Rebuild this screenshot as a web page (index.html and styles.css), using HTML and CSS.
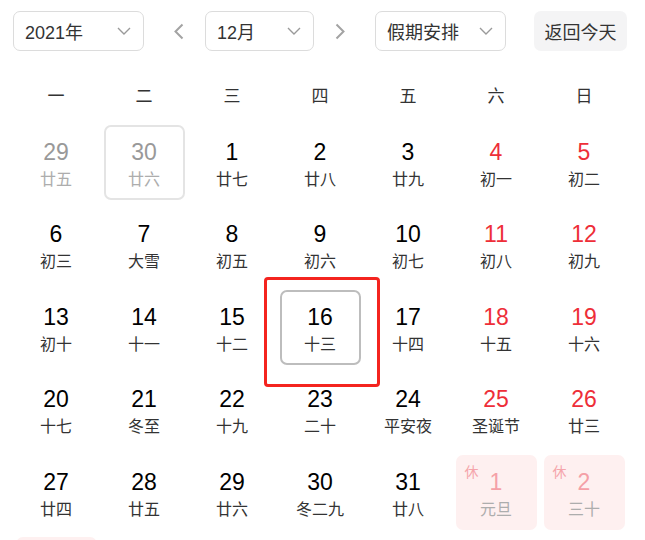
FILE: index.html
```html
<!DOCTYPE html>
<html lang="zh-CN">
<head>
<meta charset="utf-8">
<title>日历</title>
<link rel="stylesheet" href="styles.css">
</head>
<body>
<div class="calendar">
  <div class="toolbar">
    <div class="select select-year"><span>2021年</span><svg class="chev" width="14" height="8" viewBox="0 0 14 8"><path d="M1 1l6 6 6-6"/></svg></div>
    <div class="arrow arrow-prev"><svg width="11" height="17" viewBox="0 0 11 17"><path d="M9.5 1.5 2.5 8.5l7 7"/></svg></div>
    <div class="select select-month"><span>12月</span><svg class="chev" width="14" height="8" viewBox="0 0 14 8"><path d="M1 1l6 6 6-6"/></svg></div>
    <div class="arrow arrow-next"><svg width="11" height="17" viewBox="0 0 11 17"><path d="M1.5 1.5l7 7-7 7"/></svg></div>
    <div class="select select-holiday"><span>假期安排</span><svg class="chev" width="14" height="8" viewBox="0 0 14 8"><path d="M1 1l6 6 6-6"/></svg></div>
    <div class="today-btn">返回今天</div>
  </div>

  <div class="weekdays">
    <div>一</div><div>二</div><div>三</div><div>四</div><div>五</div><div>六</div><div>日</div>
  </div>

  <div class="days">
    <div class="day other"><span class="num">29</span><span class="lunar">廿五</span></div>
    <div class="day other hover"><span class="num">30</span><span class="lunar">廿六</span></div>
    <div class="day"><span class="num">1</span><span class="lunar">廿七</span></div>
    <div class="day"><span class="num">2</span><span class="lunar">廿八</span></div>
    <div class="day"><span class="num">3</span><span class="lunar">廿九</span></div>
    <div class="day weekend"><span class="num">4</span><span class="lunar">初一</span></div>
    <div class="day weekend"><span class="num">5</span><span class="lunar">初二</span></div>

    <div class="day"><span class="num">6</span><span class="lunar">初三</span></div>
    <div class="day"><span class="num">7</span><span class="lunar">大雪</span></div>
    <div class="day"><span class="num">8</span><span class="lunar">初五</span></div>
    <div class="day"><span class="num">9</span><span class="lunar">初六</span></div>
    <div class="day"><span class="num">10</span><span class="lunar">初七</span></div>
    <div class="day weekend"><span class="num">11</span><span class="lunar">初八</span></div>
    <div class="day weekend"><span class="num">12</span><span class="lunar">初九</span></div>

    <div class="day"><span class="num">13</span><span class="lunar">初十</span></div>
    <div class="day"><span class="num">14</span><span class="lunar">十一</span></div>
    <div class="day"><span class="num">15</span><span class="lunar">十二</span></div>
    <div class="day today"><span class="num">16</span><span class="lunar">十三</span><span class="mark"></span></div>
    <div class="day"><span class="num">17</span><span class="lunar">十四</span></div>
    <div class="day weekend"><span class="num">18</span><span class="lunar">十五</span></div>
    <div class="day weekend"><span class="num">19</span><span class="lunar">十六</span></div>

    <div class="day"><span class="num">20</span><span class="lunar">十七</span></div>
    <div class="day"><span class="num">21</span><span class="lunar">冬至</span></div>
    <div class="day"><span class="num">22</span><span class="lunar">十九</span></div>
    <div class="day"><span class="num">23</span><span class="lunar">二十</span></div>
    <div class="day"><span class="num">24</span><span class="lunar">平安夜</span></div>
    <div class="day weekend"><span class="num">25</span><span class="lunar">圣诞节</span></div>
    <div class="day weekend"><span class="num">26</span><span class="lunar">廿三</span></div>

    <div class="day"><span class="num">27</span><span class="lunar">廿四</span></div>
    <div class="day"><span class="num">28</span><span class="lunar">廿五</span></div>
    <div class="day"><span class="num">29</span><span class="lunar">廿六</span></div>
    <div class="day"><span class="num">30</span><span class="lunar">冬二九</span></div>
    <div class="day"><span class="num">31</span><span class="lunar">廿八</span></div>
    <div class="day other holiday"><span class="rest">休</span><span class="num">1</span><span class="lunar">元旦</span></div>
    <div class="day other holiday"><span class="rest">休</span><span class="num">2</span><span class="lunar">三十</span></div>

    <div class="day other holiday"></div>
  </div>
</div>
</body>
</html>
```

FILE: styles.css
```css
html, body {
  margin: 0;
  padding: 0;
  overflow: hidden;
  background: #fff;
}

body {
  font-family: "Liberation Sans", "Noto Sans CJK SC", sans-serif;
  color: #333;
}

.calendar {
  width: 645px;
}

.toolbar {
  display: flex;
  align-items: center;
  padding: 11px 0 0 13px;
  height: 40px;
}

.select {
  box-sizing: border-box;
  height: 40px;
  border: 1px solid #dcdcdc;
  border-radius: 7px;
  display: flex;
  align-items: center;
  justify-content: space-between;
  padding: 0 12px 0 11px;
  font-size: 18px;
  color: #333;
}

.select-year { width: 131px; }
.select-month { width: 109px; }
.select-holiday { width: 131px; }

.chev path {
  fill: none;
  stroke: #9a9a9a;
  stroke-width: 1.4;
}

.arrow {
  width: 11px;
  height: 17px;
  display: flex;
}

.arrow path {
  fill: none;
  stroke: #a3a3a3;
  stroke-width: 2;
}

.arrow-prev { margin: 0 21px 0 29px; }
.arrow-next { margin: 0 29px 0 21px; }

.today-btn {
  margin-left: 28px;
  width: 93px;
  height: 40px;
  border-radius: 7px;
  background: #f4f4f5;
  display: flex;
  align-items: center;
  justify-content: center;
  font-size: 18px;
  color: #333;
}

.weekdays {
  display: grid;
  grid-template-columns: repeat(7, 88px);
  margin: 28px 0 0 12px;
  height: 36px;
  line-height: 36px;
  text-align: center;
  font-size: 17px;
  color: #333;
}

.days {
  display: grid;
  grid-template-columns: repeat(7, 88px);
  grid-auto-rows: 82.5px;
  margin: 6px 0 0 12px;
}

.day {
  position: relative;
  box-sizing: border-box;
  margin: 3.75px 3.5px;
  border: 2px solid transparent;
  border-radius: 7px;
  display: flex;
  flex-direction: column;
  align-items: center;
  padding-top: 11px;
}

.num {
  font-size: 23px;
  line-height: 28px;
  color: #000;
}

.lunar {
  font-size: 16px;
  line-height: 28px;
  color: #333;
  white-space: nowrap;
}

.weekend .num {
  color: #ee2e38;
}

.other .num { color: #999; }
.other .lunar { color: #adadad; }

.hover {
  border-color: #e4e4e4;
}

.today {
  border-color: #bdbdbd;
}

.mark {
  position: absolute;
  left: -18px;
  top: -15px;
  width: 110px;
  height: 104px;
  border: 3px solid #f4241f;
  border-radius: 4px;
}

.holiday {
  background: #fef0f0;
}

.holiday .num {
  color: #f5a0a7;
}

.rest {
  position: absolute;
  left: 7px;
  top: 6px;
  font-size: 14px;
  line-height: 18px;
  color: #f5a5ab;
}
```
